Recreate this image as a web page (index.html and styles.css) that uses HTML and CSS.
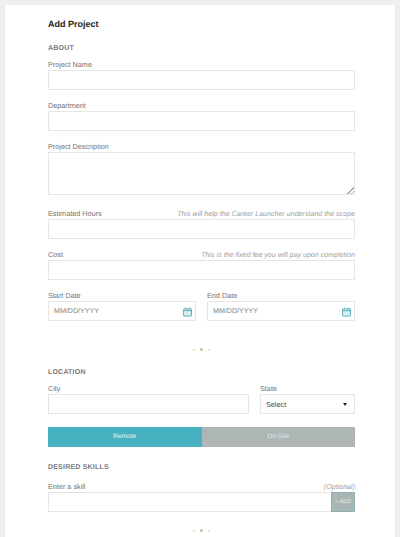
FILE: index.html
```html
<!DOCTYPE html>
<html lang="en">
<head>
    <meta charset="UTF-8">
    <title>Add Project</title>
    <link rel="stylesheet" href="styles.css">
</head>
<body>
    <div class="card">
        <h1 class="title">Add Project</h1>

        <h2 class="section first">ABOUT</h2>
        <div class="field">
            <label class="label">Project Name</label>
            <input class="input" type="text">
        </div>
        <div class="field">
            <label class="label">Department</label>
            <input class="input" type="text">
        </div>
        <div class="field">
            <label class="label">Project Description</label>
            <textarea class="input area"></textarea>
        </div>
        <div class="field gap-big">
            <div class="label-row">
                <label class="label">Estimated Hours</label>
                <span class="hint">This will help the Career Launcher understand the scope</span>
            </div>
            <input class="input" type="text">
        </div>
        <div class="field">
            <div class="label-row">
                <label class="label">Cost</label>
                <span class="hint">This is the fixed fee you will pay upon completion</span>
            </div>
            <input class="input" type="text">
        </div>
        <div class="row dates">
            <div class="field col">
                <label class="label">Start Date</label>
                <div class="date">
                    <span class="date-text">MM/DD/YYYY</span>
                    <svg class="cal" viewBox="0 0 10 10" width="9" height="10">
                        <path d="M2.5 0v2M7.5 0v2" stroke="#4aa8b0" fill="none"/>
                        <rect x=".5" y="1.5" width="9" height="8" rx="1" fill="#d8eef0" stroke="#4aa8b0"/>
                        <path d="M.5 3.5h9" stroke="#4aa8b0" fill="none"/>
                    </svg>
                </div>
            </div>
            <div class="field col">
                <label class="label">End Date</label>
                <div class="date">
                    <span class="date-text">MM/DD/YYYY</span>
                    <svg class="cal" viewBox="0 0 10 10" width="9" height="10">
                        <path d="M2.5 0v2M7.5 0v2" stroke="#4aa8b0" fill="none"/>
                        <rect x=".5" y="1.5" width="9" height="8" rx="1" fill="#d8eef0" stroke="#4aa8b0"/>
                        <path d="M.5 3.5h9" stroke="#4aa8b0" fill="none"/>
                    </svg>
                </div>
            </div>
        </div>

        <div class="dots"><i></i><i class="mid"></i><i></i></div>

        <h2 class="section">LOCATION</h2>
        <div class="row location">
            <div class="field city">
                <label class="label">City</label>
                <input class="input" type="text">
            </div>
            <div class="field state">
                <label class="label">State</label>
                <div class="select">
                    <span>Select</span>
                    <span class="caret"></span>
                </div>
            </div>
        </div>

        <div class="toggle">
            <div class="toggle-item on">Remote</div>
            <div class="toggle-item">On-Site</div>
        </div>

        <h2 class="section skills">DESIRED SKILLS</h2>
        <div class="field skill-field">
            <div class="label-row">
                <label class="label">Enter a skill</label>
                <span class="hint">(Optional)</span>
            </div>
            <div class="skill">
                <input class="input skill-input" type="text">
                <div class="add">+ ADD</div>
            </div>
        </div>

        <div class="dots last"><i></i><i class="mid"></i><i></i></div>
    </div>
</body>
</html>
```

FILE: styles.css
```css
*{
    padding: 0;
    margin: 0;
    box-sizing: border-box;
}
html, body{
    height: 100%;
    overflow: hidden;
}
body{
    background-color: #efefef;
    padding: 5px 5px 0;
    font-family: "Liberation Sans", Arial, sans-serif;
    color: #777;
    text-rendering: geometricPrecision;
}
.card{
    height: 100%;
    background-color: #fff;
    padding: 13px 40px 0 43px;
}
.title{
    font-size: 9px;
    line-height: 12px;
    height: 12px;
    font-weight: bold;
    color: #222;
}
.section{
    font-size: 7px;
    line-height: 12px;
    height: 10px;
    font-weight: bold;
    color: #777;
    letter-spacing: .2px;
    margin-bottom: 6px;
}
.section.first{
    margin-top: 13px;
}
.field{
    display: block;
    margin-bottom: 10px;
}
.label{
    display: block;
    font-size: 7.25px;
    line-height: 12px;
    height: 11px;
    color: #737373;
}
.label-row{
    display: flex;
    justify-content: space-between;
}
.hint{
    font-size: 7.1px;
    line-height: 12px;
    height: 11px;
    font-style: italic;
    color: #a0a0a0;
}
.input{
    display: block;
    width: 100%;
    height: 20px;
    background-color: #fff;
    border: 1px solid #e6e6e6;
    outline: none;
}
.area{
    height: 43px;
    font-family: inherit;
}
.area::-webkit-resizer{
    background: linear-gradient(135deg, transparent 50%, #aaa 50%, #aaa 60%, transparent 60%, transparent 75%, #aaa 75%, #aaa 85%, transparent 85%) right bottom / 7px 7px no-repeat;
}
.gap-big{
    margin-top: 13px;
}
.row{
    display: flex;
}
.dates{
    gap: 11px;
}
.col{
    flex: 1;
    margin-bottom: 0;
}
.date{
    display: flex;
    align-items: center;
    justify-content: space-between;
    height: 20px;
    padding: 0 3px 0 5px;
    border: 1px solid #e6e6e6;
}
.date-text{
    font-size: 7.1px;
    color: #808080;
}
.cal{
    margin-top: 1px;
}
.dots{
    display: flex;
    justify-content: center;
    align-items: center;
    gap: 5px;
    height: 3px;
    margin: 27px 0 16px;
}
.dots i{
    width: 2px;
    height: 2px;
    border-radius: 50%;
    background-color: #e2dcbc;
}
.dots .mid{
    width: 3px;
    height: 3px;
    background-color: #c9c49a;
}
.dots.last{
    margin: 17px 0 0;
}
.location{
    gap: 11px;
    margin-bottom: 13px;
}
.location .field{
    margin-bottom: 0;
}
.city{
    flex: 1;
}
.state{
    width: 95px;
}
.select{
    display: flex;
    align-items: center;
    justify-content: space-between;
    height: 20px;
    padding: 0 7px 0 5px;
    border: 1px solid #e6e6e6;
    font-size: 7.25px;
    color: #444;
}
.caret{
    width: 0;
    height: 0;
    border-left: 2px solid transparent;
    border-right: 2px solid transparent;
    border-top: 3px solid #222;
}
.toggle{
    display: flex;
    height: 20px;
}
.toggle-item{
    flex: 1;
    font-size: 6.5px;
    line-height: 20px;
    text-align: center;
    color: #e2e8e8;
    background-color: #aeb5b5;
}
.toggle-item.on{
    color: #e8f6f8;
    background-color: #48b1c1;
}
.skills{
    margin-top: 15px;
    margin-bottom: 9px;
}
.skill-field{
    margin-bottom: 0;
}
.skill{
    display: flex;
}
.skill-input{
    flex: 1;
    width: auto;
    border-right: none;
}
.add{
    width: 24px;
    height: 20px;
    font-size: 5.5px;
    line-height: 18px;
    text-align: center;
    color: #e6eaea;
    background-color: #a9b6b6;
    border: 1px solid #8fb0b0;
}
```
